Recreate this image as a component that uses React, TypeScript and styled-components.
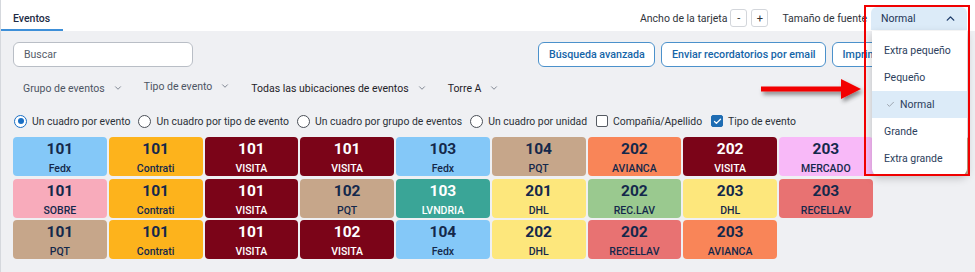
import React from "react";
import styled, { createGlobalStyle } from "styled-components";
import { Check, ChevronDown, ChevronUp } from "lucide-react";

type TileData = { num: string; label: string; kind: string };

const palette: Record<string, { bg: string; fg: string }> = {
    fedx: { bg: "#84c8f8", fg: "#14284b" },
    contrati: { bg: "#fdb31c", fg: "#14284b" },
    visita: { bg: "#7b0418", fg: "#ffffff" },
    pqt: { bg: "#c6a68a", fg: "#14284b" },
    avianca: { bg: "#f98558", fg: "#14284b" },
    mercado: { bg: "#f8b9f8", fg: "#14284b" },
    sobre: { bg: "#f8abbb", fg: "#14284b" },
    lvndria: { bg: "#3aa597", fg: "#ffffff" },
    dhl: { bg: "#fde77c", fg: "#14284b" },
    reclav: { bg: "#9ac98f", fg: "#14284b" },
    recellav: { bg: "#e87272", fg: "#14284b" },
};

const rows: TileData[][] = [
    [
        { num: "101", label: "Fedx", kind: "fedx" },
        { num: "101", label: "Contrati", kind: "contrati" },
        { num: "101", label: "VISITA", kind: "visita" },
        { num: "101", label: "VISITA", kind: "visita" },
        { num: "103", label: "Fedx", kind: "fedx" },
        { num: "104", label: "PQT", kind: "pqt" },
        { num: "202", label: "AVIANCA", kind: "avianca" },
        { num: "202", label: "VISITA", kind: "visita" },
        { num: "203", label: "MERCADO", kind: "mercado" },
        { num: "203", label: "PQT", kind: "pqt" },
    ],
    [
        { num: "101", label: "SOBRE", kind: "sobre" },
        { num: "101", label: "Contrati", kind: "contrati" },
        { num: "101", label: "VISITA", kind: "visita" },
        { num: "102", label: "PQT", kind: "pqt" },
        { num: "103", label: "LVNDRIA", kind: "lvndria" },
        { num: "201", label: "DHL", kind: "dhl" },
        { num: "202", label: "REC.LAV", kind: "reclav" },
        { num: "203", label: "DHL", kind: "dhl" },
        { num: "203", label: "RECELLAV", kind: "recellav" },
    ],
    [
        { num: "101", label: "PQT", kind: "pqt" },
        { num: "101", label: "Contrati", kind: "contrati" },
        { num: "101", label: "VISITA", kind: "visita" },
        { num: "102", label: "VISITA", kind: "visita" },
        { num: "104", label: "Fedx", kind: "fedx" },
        { num: "202", label: "DHL", kind: "dhl" },
        { num: "202", label: "RECELLAV", kind: "recellav" },
        { num: "203", label: "AVIANCA", kind: "avianca" },
    ],
];

const filters = [
    { label: "Grupo de eventos", dark: false, lift: false },
    { label: "Tipo de evento", dark: false, lift: true },
    { label: "Todas las ubicaciones de eventos", dark: true, lift: false },
    { label: "Torre A", dark: true, lift: false },
];

const sizes = ["Extra pequeño", "Pequeño", "Normal", "Grande", "Extra grande"];

const App = () => {
    return (
        <Page>
            <GlobalStyle />
            <Header>
                <Tab>Eventos</Tab>
                <HeaderControls>
                    <ControlLabel>Ancho de la tarjeta</ControlLabel>
                    <StepButton>-</StepButton>
                    <StepButton>+</StepButton>
                    <ControlLabel $spaced>Tamaño de fuente</ControlLabel>
                    <SelectWrap>
                        <SelectBox>
                            <span>Normal</span>
                            <ChevronUp size={13} strokeWidth={2.6} color="#1f3d6b" />
                        </SelectBox>
                        <Menu>
                            {sizes.map((s) => (
                                <MenuItem key={s} $selected={s === "Normal"}>
                                    {s === "Normal" && (
                                        <Check size={9} strokeWidth={2} color="#8a8f98" />
                                    )}
                                    {s}
                                </MenuItem>
                            ))}
                        </Menu>
                    </SelectWrap>
                </HeaderControls>
            </Header>

            <Content>
                <SearchRow>
                    <SearchInput placeholder="Buscar" />
                    <Actions>
                        <ActionButton>Búsqueda avanzada</ActionButton>
                        <ActionButton>Enviar recordatorios por email</ActionButton>
                        <ActionButton>Imprimir etiquetas</ActionButton>
                    </Actions>
                </SearchRow>

                <FilterRow>
                    {filters.map((f) => (
                        <Filter key={f.label} $dark={f.dark} $lift={f.lift}>
                            {f.label}
                            <ChevronDown size={10} strokeWidth={2} color="#6b7280" />
                        </Filter>
                    ))}
                </FilterRow>

                <OptionRow>
                    <Option>
                        <Radio $checked />
                        Un cuadro por evento
                    </Option>
                    <Option>
                        <Radio />
                        Un cuadro por tipo de evento
                    </Option>
                    <Option>
                        <Radio />
                        Un cuadro por grupo de eventos
                    </Option>
                    <Option>
                        <Radio />
                        Un cuadro por unidad
                    </Option>
                    <Option>
                        <Box />
                        Compañía/Apellido
                    </Option>
                    <Option>
                        <Box $checked>
                            <Check size={9} strokeWidth={3.5} color="#ffffff" />
                        </Box>
                        Tipo de evento
                    </Option>
                </OptionRow>

                <Board>
                    {rows.map((row, r) => (
                        <TileRow key={r}>
                            {row.map((t, i) => (
                                <Tile key={i} $bg={palette[t.kind].bg} $fg={palette[t.kind].fg}>
                                    <TileNum>{t.num}</TileNum>
                                    <TileLabel>{t.label}</TileLabel>
                                </Tile>
                            ))}
                        </TileRow>
                    ))}
                </Board>
            </Content>

            {/* anotación: flecha y recuadro rojo */}
            <Arrow width="112" height="32" viewBox="0 0 112 32">
                <defs>
                    <filter id="sh" x="-10%" y="-30%" width="130%" height="180%">
                        <feDropShadow dx="2" dy="3" stdDeviation="2" floodColor="#000" floodOpacity="0.45" />
                    </filter>
                </defs>
                <g filter="url(#sh)">
                    <rect x="4" y="10.5" width="84" height="5" fill="#f20000" />
                    <polygon points="84,3 104,13 84,23" fill="#f20000" />
                </g>
            </Arrow>
            <Highlight />
        </Page>
    );
};

export default App;

const GlobalStyle = createGlobalStyle`
    body {
        margin: 0;
        background: #ffffff;
        font-family: Roboto, "Liberation Sans", sans-serif;
    }
    * {
        box-sizing: border-box;
    }
`;

const Page = styled.div`
    position: relative;
    width: 975px;
    height: 272px;
    overflow: hidden;
    background: #eff0f3;
    border-left: 1px solid #d5d8dd;
`;

const Header = styled.div`
    height: 31px;
    background: #ffffff;
    display: flex;
    justify-content: space-between;
    align-items: flex-start;
    padding-right: 8px;
`;

const Tab = styled.div`
    height: 31px;
    width: 62px;
    padding: 12px 12px 0 12px;
    font-size: 10.5px;
    font-weight: 500;
    color: #1d2b45;
    border-bottom: 2px solid #3d8fd8;
`;

const HeaderControls = styled.div`
    display: flex;
    align-items: center;
    height: 31px;
    padding-top: 5px;
    gap: 4px;
`;

const ControlLabel = styled.span<{ $spaced?: boolean }>`
    font-size: 10.5px;
    color: #30343b;
    margin-left: ${(p) => (p.$spaced ? "10px" : "0")};
    margin-right: ${(p) => (p.$spaced ? "0" : "-1px")};
`;

const StepButton = styled.div`
    width: 17px;
    height: 18px;
    border: 1px solid #d3d6db;
    border-radius: 3px;
    background: #ffffff;
    display: flex;
    align-items: center;
    justify-content: center;
    font-size: 11px;
    color: #333;
`;

const SelectWrap = styled.div`
    position: relative;
`;

const SelectBox = styled.div`
    width: 96px;
    height: 23px;
    background: #dcebf8;
    border-radius: 6px 6px 0 0;
    display: flex;
    align-items: center;
    justify-content: space-between;
    padding: 0 10px 0 10px;
    font-size: 10.5px;
    color: #1d3557;
`;

const Menu = styled.div`
    position: absolute;
    top: 24px;
    left: 1px;
    width: 95px;
    padding: 6px 0 3px;
    background: #ffffff;
    border-radius: 0 0 6px 6px;
    box-shadow: 0 3px 8px rgba(0, 0, 0, 0.22);
    z-index: 5;
`;

const MenuItem = styled.div<{ $selected?: boolean }>`
    height: 27px;
    display: flex;
    align-items: center;
    gap: 5px;
    padding-left: ${(p) => (p.$selected ? "14px" : "12px")};
    font-size: 10.5px;
    color: #2c3e5c;
    background: ${(p) => (p.$selected ? "#dcebf8" : "transparent")};
    white-space: nowrap;
`;

const Content = styled.div`
    padding: 11px 0 0 12px;
`;

const SearchRow = styled.div`
    display: flex;
    align-items: center;
    height: 25px;
    gap: 345px;
    overflow: hidden;
`;

const SearchInput = styled.input`
    flex-shrink: 0;
    width: 180px;
    height: 25px;
    border: 1px solid #b9bec6;
    border-radius: 6px;
    background: #ffffff;
    padding: 0 10px;
    font-family: inherit;
    font-size: 10.5px;
    outline: none;
    &::placeholder {
        color: #555d6a;
    }
`;

const Actions = styled.div`
    display: flex;
    flex-shrink: 0;
    gap: 6px;
`;

const ActionButton = styled.button`
    height: 25px;
    padding: 0 9px 0 10px;
    border: 1px solid #4b91cb;
    border-radius: 6px;
    background: #ffffff;
    color: #1565a8;
    font-family: inherit;
    font-size: 10.7px;
    font-weight: 500;
    white-space: nowrap;
`;

const FilterRow = styled.div`
    display: flex;
    align-items: center;
    gap: 21px;
    height: 16px;
    margin-top: 13px;
    padding-left: 10px;
`;

const Filter = styled.div<{ $dark?: boolean; $lift?: boolean }>`
    display: flex;
    align-items: center;
    gap: 8px;
    font-size: 10.5px;
    color: ${(p) => (p.$dark ? "#1f2329" : "#4d5563")};
    position: relative;
    top: ${(p) => (p.$lift ? "-2px" : "0")};
`;

const OptionRow = styled.div`
    display: flex;
    align-items: center;
    gap: 8px;
    height: 16px;
    margin-top: 17px;
    padding-left: 1px;
`;

const Option = styled.label`
    display: flex;
    align-items: center;
    gap: 5px;
    font-size: 10.4px;
    color: #2b3038;
`;

const Radio = styled.span<{ $checked?: boolean }>`
    width: 13px;
    height: 13px;
    border-radius: 50%;
    border: 1.5px solid ${(p) => (p.$checked ? "#1a6fc4" : "#4a4f57")};
    background: #ffffff;
    display: flex;
    align-items: center;
    justify-content: center;
    &::after {
        content: "";
        width: 6px;
        height: 6px;
        border-radius: 50%;
        background: ${(p) => (p.$checked ? "#1a6fc4" : "transparent")};
    }
`;

const Box = styled.span<{ $checked?: boolean }>`
    width: 12px;
    height: 12px;
    border-radius: 2px;
    border: 1.5px solid ${(p) => (p.$checked ? "#1f6db3" : "#555a62")};
    background: ${(p) => (p.$checked ? "#1f6db3" : "#ffffff")};
    display: flex;
    align-items: center;
    justify-content: center;
    margin-left: 1px;
`;

const Board = styled.div`
    display: flex;
    flex-direction: column;
    gap: 2.5px;
    margin-top: 8px;
`;

const TileRow = styled.div`
    display: flex;
    gap: 2px;
`;

const Tile = styled.div<{ $bg: string; $fg: string }>`
    width: 93.75px;
    height: 39px;
    flex-shrink: 0;
    border-radius: 4px;
    background: ${(p) => p.$bg};
    color: ${(p) => p.$fg};
    display: flex;
    flex-direction: column;
    align-items: center;
    padding-top: 2px;
`;

const TileNum = styled.div`
    font-size: 15.5px;
    font-weight: 700;
    line-height: 20px;
`;

const TileLabel = styled.div`
    font-size: 10.5px;
    font-weight: 500;
    line-height: 14px;
    margin-top: 3px;
`;

const Arrow = styled.svg`
    position: absolute;
    left: 756px;
    top: 76px;
    z-index: 6;
`;

const Highlight = styled.div`
    position: absolute;
    left: 863px;
    top: 5px;
    width: 106px;
    height: 171px;
    border: 2px solid #f00000;
    z-index: 7;
    pointer-events: none;
`;
